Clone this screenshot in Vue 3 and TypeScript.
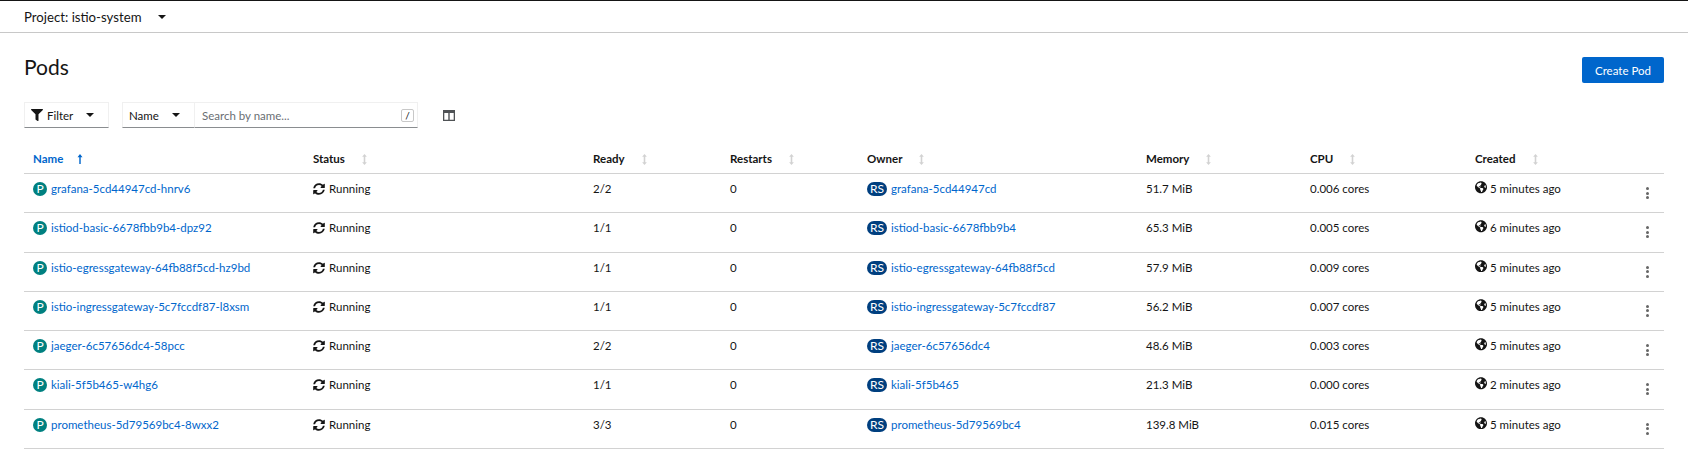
<script setup lang="ts">
interface Pod {
  name: string
  ready: string
  owner: string
  memory: string
  cpu: string
  created: string
}
const columns = ['Status', 'Ready', 'Restarts', 'Owner', 'Memory', 'CPU', 'Created']
const pods: Pod[] = [
  { name: 'grafana-5cd44947cd-hnrv6', ready: '2/2', owner: 'grafana-5cd44947cd', memory: '51.7 MiB', cpu: '0.006 cores', created: '5 minutes ago' },
  { name: 'istiod-basic-6678fbb9b4-dpz92', ready: '1/1', owner: 'istiod-basic-6678fbb9b4', memory: '65.3 MiB', cpu: '0.005 cores', created: '6 minutes ago' },
  { name: 'istio-egressgateway-64fb88f5cd-hz9bd', ready: '1/1', owner: 'istio-egressgateway-64fb88f5cd', memory: '57.9 MiB', cpu: '0.009 cores', created: '5 minutes ago' },
  { name: 'istio-ingressgateway-5c7fccdf87-l8xsm', ready: '1/1', owner: 'istio-ingressgateway-5c7fccdf87', memory: '56.2 MiB', cpu: '0.007 cores', created: '5 minutes ago' },
  { name: 'jaeger-6c57656dc4-58pcc', ready: '2/2', owner: 'jaeger-6c57656dc4', memory: '48.6 MiB', cpu: '0.003 cores', created: '5 minutes ago' },
  { name: 'kiali-5f5b465-w4hg6', ready: '1/1', owner: 'kiali-5f5b465', memory: '21.3 MiB', cpu: '0.000 cores', created: '2 minutes ago' },
  { name: 'prometheus-5d79569bc4-8wxx2', ready: '3/3', owner: 'prometheus-5d79569bc4', memory: '139.8 MiB', cpu: '0.015 cores', created: '5 minutes ago' },
]
</script>

<template>
  <div class="page">
    <div class="project-bar">
      <span>Project: istio-system</span>
      <i class="caret project-caret"></i>
    </div>
    <div class="heading">
      <h1>Pods</h1>
      <button class="create">Create Pod</button>
    </div>
    <div class="toolbar">
      <div class="select filter">
        <svg class="funnel" viewBox="0 0 512 512"><path d="M487 0H25C3 0-8 27 7 43l185 185v206c0 8 4 15 10 20l80 56c16 11 38 0 38-20V228L505 43c15-16 4-43-18-43z"/></svg>
        <span>Filter</span>
        <i class="caret"></i>
      </div>
      <div class="search">
        <div class="select name-select"><span>Name</span><i class="caret"></i></div>
        <div class="search-input">
          <span class="placeholder">Search by name...</span>
          <span class="slash">/</span>
        </div>
      </div>
      <svg class="columns-icon" viewBox="0 0 12 11"><path fill-rule="evenodd" d="M0 0h12v11H0zM1.300 3v6.700h4V3zM6.700 3v6.700h4V3z"/></svg>
    </div>
    <div class="table">
      <div class="row head">
        <div class="cell active">
          <span>Name</span>
          <svg class="sort up" viewBox="0 0 8 14"><path d="M4 0 7.500 4.500H5V14H3V4.500H.5z"/></svg>
        </div>
        <div v-for="c in columns" :key="c" class="cell">
          <span>{{ c }}</span>
          <svg class="sort muted" viewBox="0 0 8 14"><path d="M4 0 7 3.500H5v7h2L4 14 1 10.500h2v-7H1z"/></svg>
        </div>
      </div>
      <div v-for="p in pods" :key="p.name" class="row">
        <div class="cell"><span class="badge pod">P</span><a>{{ p.name }}</a></div>
        <div class="cell">
          <svg class="sync" viewBox="0 0 512 512"><path d="M370.700 133.300C339.500 104 298.900 88 255.800 88c-77.500.1-144.300 53.200-162.800 126.900-1.300 5.400-6.100 9.100-11.600 9.100H24.100c-7.500 0-13.200-6.800-11.800-14.200C33.900 94.900 134.800 8 256 8c66.500 0 126.800 26.100 171.300 68.700L463 41C478.100 25.900 504 36.600 504 57.900V192c0 13.300-10.700 24-24 24H345.900c-21.400 0-32.100-25.900-17-41l41.800-41.700zM32 296h134.100c21.400 0 32.100 25.900 17 41l-41.800 41.800c31.300 29.300 71.800 45.300 114.900 45.200 77.400-.1 144.300-53.100 162.800-126.800 1.300-5.400 6.100-9.100 11.600-9.100h57.300c7.500 0 13.200 6.800 11.800 14.200C478.100 417.100 377.200 504 256 504c-66.500 0-126.800-26.100-171.300-68.700L49 471C33.900 486.100 8 475.400 8 454.100V320c0-13.300 10.700-24 24-24z"/></svg>
          <span>Running</span>
        </div>
        <div class="cell">{{ p.ready }}</div>
        <div class="cell">0</div>
        <div class="cell"><span class="badge rs">RS</span><a>{{ p.owner }}</a></div>
        <div class="cell">{{ p.memory }}</div>
        <div class="cell">{{ p.cpu }}</div>
        <div class="cell created">
          <svg class="globe" viewBox="0 0 496 512"><path d="M248 8C111.030 8 0 119.030 0 256s111.030 248 248 248 248-111.030 248-248S384.970 8 248 8zm82.290 357.600c-3.900 3.880-7.990 7.950-11.310 11.280-2.990 3-5.100 6.700-6.170 10.710-1.510 5.660-2.730 11.380-4.770 16.870l-17.390 46.850c-13.760 3-28 4.690-42.650 4.690v-27.380c1.690-12.620-7.640-36.260-22.630-51.250-6-6-9.370-14.140-9.370-22.630v-32.010c0-11.640-6.270-22.340-16.460-27.970-14.370-7.950-34.810-19.060-48.810-26.110-11.480-5.780-22.100-13.140-31.650-21.750l-.8-.72a114.792 114.792 0 0 1-18.060-20.740c-9.380-13.770-24.660-36.420-34.590-51.140 20.470-45.500 57.360-82.040 103.200-101.890l24.010 12.010C203.480 89.740 216 82.010 216 70.110v-11.300c7.990-1.290 16.120-2.110 24.450-2.420l28.300 28.300c6.250 6.250 6.250 16.380 0 22.630L264 112l-10.340 10.340c-3.120 3.120-3.120 8.190 0 11.310l4.690 4.690c3.120 3.120 3.120 8.190 0 11.310l-8 8a8.008 8.008 0 0 1-5.670 2.340h-8.990c-2.080 0-4.080.81-5.580 2.270l-9.920 9.650a8.008 8.008 0 0 0-1.580 9.310l15.590 31.190c2.660 5.320-1.210 11.580-7.150 11.580h-5.640c-1.930 0-3.790-.7-5.240-1.960l-9.280-8.060a16.017 16.017 0 0 0-15.550-3.100l-31.170 10.390a11.950 11.950 0 0 0-8.170 11.340c0 4.530 2.560 8.660 6.610 10.690l11.080 5.540c9.410 4.710 19.790 7.160 30.310 7.160s22.590 27.290 32 32h66.750c8.490 0 16.620 3.370 22.630 9.370l13.690 13.690a30.503 30.503 0 0 1 8.930 21.570 46.536 46.536 0 0 1-13.720 32.980zM417 274.250c-5.790-1.450-10.840-5-14.150-9.970l-17.980-26.970a23.970 23.970 0 0 1 0-26.620l19.590-29.380c2.320-3.470 5.500-6.290 9.240-8.150l12.980-6.490C440.200 193.590 448 223.870 448 256c0 8.670-.74 17.160-1.820 25.540L417 274.250z"/></svg>
          <span>{{ p.created }}</span>
        </div>
        <div class="kebab"><i></i><i></i><i></i></div>
      </div>
    </div>
  </div>
</template>

<style>
html, body { margin: 0; background: #fff; }
</style>

<style scoped>
.page {
  font-family: "Lato", "Liberation Sans", sans-serif;
  font-size: 11.500px;
  color: #151515;
  height: 472px;
  box-sizing: border-box;
  border-top: 1px solid #151515;
  overflow: hidden;
}
.project-bar {
  height: 32px;
  box-sizing: border-box;
  padding: 0 24px;
  display: flex;
  align-items: center;
  font-size: 13.200px;
  border-bottom: 1px solid #c8c8c8;
}
.caret {
  display: inline-block;
  flex: none;
  width: 0;
  height: 0;
  border-left: 4px solid transparent;
  border-right: 4px solid transparent;
  border-top: 4.500px solid #151515;
}
.project-caret { margin-left: 16px; }
.heading {
  display: flex;
  justify-content: space-between;
  align-items: flex-start;
  padding: 24px 24px 0;
  height: 69px;
  box-sizing: border-box;
}
h1 {
  margin: -2px 0 0;
  font-size: 21px;
  line-height: 24px;
  font-weight: 400;
}
.create {
  width: 82px;
  height: 26px;
  background: #06c;
  color: #fff;
  border: 0;
  border-radius: 2px;
  font: inherit;
  padding: 0;
}
.toolbar {
  display: flex;
  align-items: center;
  height: 26px;
  margin: 0 24px;
}
.select {
  display: flex;
  align-items: center;
  height: 26px;
  box-sizing: border-box;
  border: 1px solid #f0f0f0;
  border-bottom-color: #8a8d90;
}
.filter { width: 85px; padding: 0 14px 0 6px; }
.funnel { width: 12px; height: 12px; fill: #151515; margin-right: 4px; }
.select .caret { margin-left: auto; }
.search { display: flex; margin-left: 13px; width: 296px; }
.name-select { width: 73px; padding: 0 14px 0 6px; flex: none; }
.search-input {
  flex: 1;
  display: flex;
  align-items: center;
  justify-content: space-between;
  height: 26px;
  box-sizing: border-box;
  padding: 0 3px 0 7px;
  border: 1px solid #f0f0f0;
  border-left: 0;
  border-bottom-color: #8a8d90;
}
.placeholder { color: #6a6e73; }
.slash {
  width: 11px;
  height: 11px;
  border: 1px solid #c8c8c8;
  border-radius: 2px;
  display: flex;
  align-items: center;
  justify-content: center;
  font-size: 10px;
}
.columns-icon { width: 12px; height: 11px; margin-left: 25px; fill: #4f5255; }
.table { margin: 13px 24px 0; }
.row {
  display: grid;
  grid-template-columns: 280px 280px 137px 137px 279px 164px 165px 198px;
  height: 39.300px;
  box-sizing: border-box;
  border-bottom: 1px solid #d2d2d2;
  position: relative;
}
.row.head {
  height: 33px;
  font-weight: 700;
  align-items: center;
}
.row.head .cell { padding-top: 4px; padding-bottom: 0; align-items: center; }
.cell {
  display: flex;
  align-items: flex-start;
  padding: 7px 0 0 9px;
  line-height: 16px;
  white-space: nowrap;
}
.active { color: #06c; }
.sort { width: 7px; height: 11px; margin-left: 16px; fill: #06c; }
.sort.up { width: 6px; height: 10px; margin-left: 14px; }
.sort.muted { fill: #d2d2d2; }
.badge {
  flex: none;
  height: 14px;
  margin-right: 4px;
  margin-top: 1px;
  color: #fff;
  font-size: 12px;
  line-height: 14px;
  text-align: center;
}
.pod { width: 14px; background: #008080; border-radius: 7px; }
.rs { width: 20px; background: #003f7f; border-radius: 7px; }
a { color: #06c; }
.sync { width: 12px; height: 12px; margin: 2px 4px 0 0; fill: #151515; }
.globe { width: 12px; height: 12.500px; margin: 0 3px 0 0; fill: #151515; }
.kebab {
  position: absolute;
  right: 15px;
  top: 13px;
  display: flex;
  flex-direction: column;
  gap: 1.500px;
}
.kebab i {
  display: block;
  width: 3px;
  height: 3px;
  border-radius: 50%;
  background: #666;
}
</style>
